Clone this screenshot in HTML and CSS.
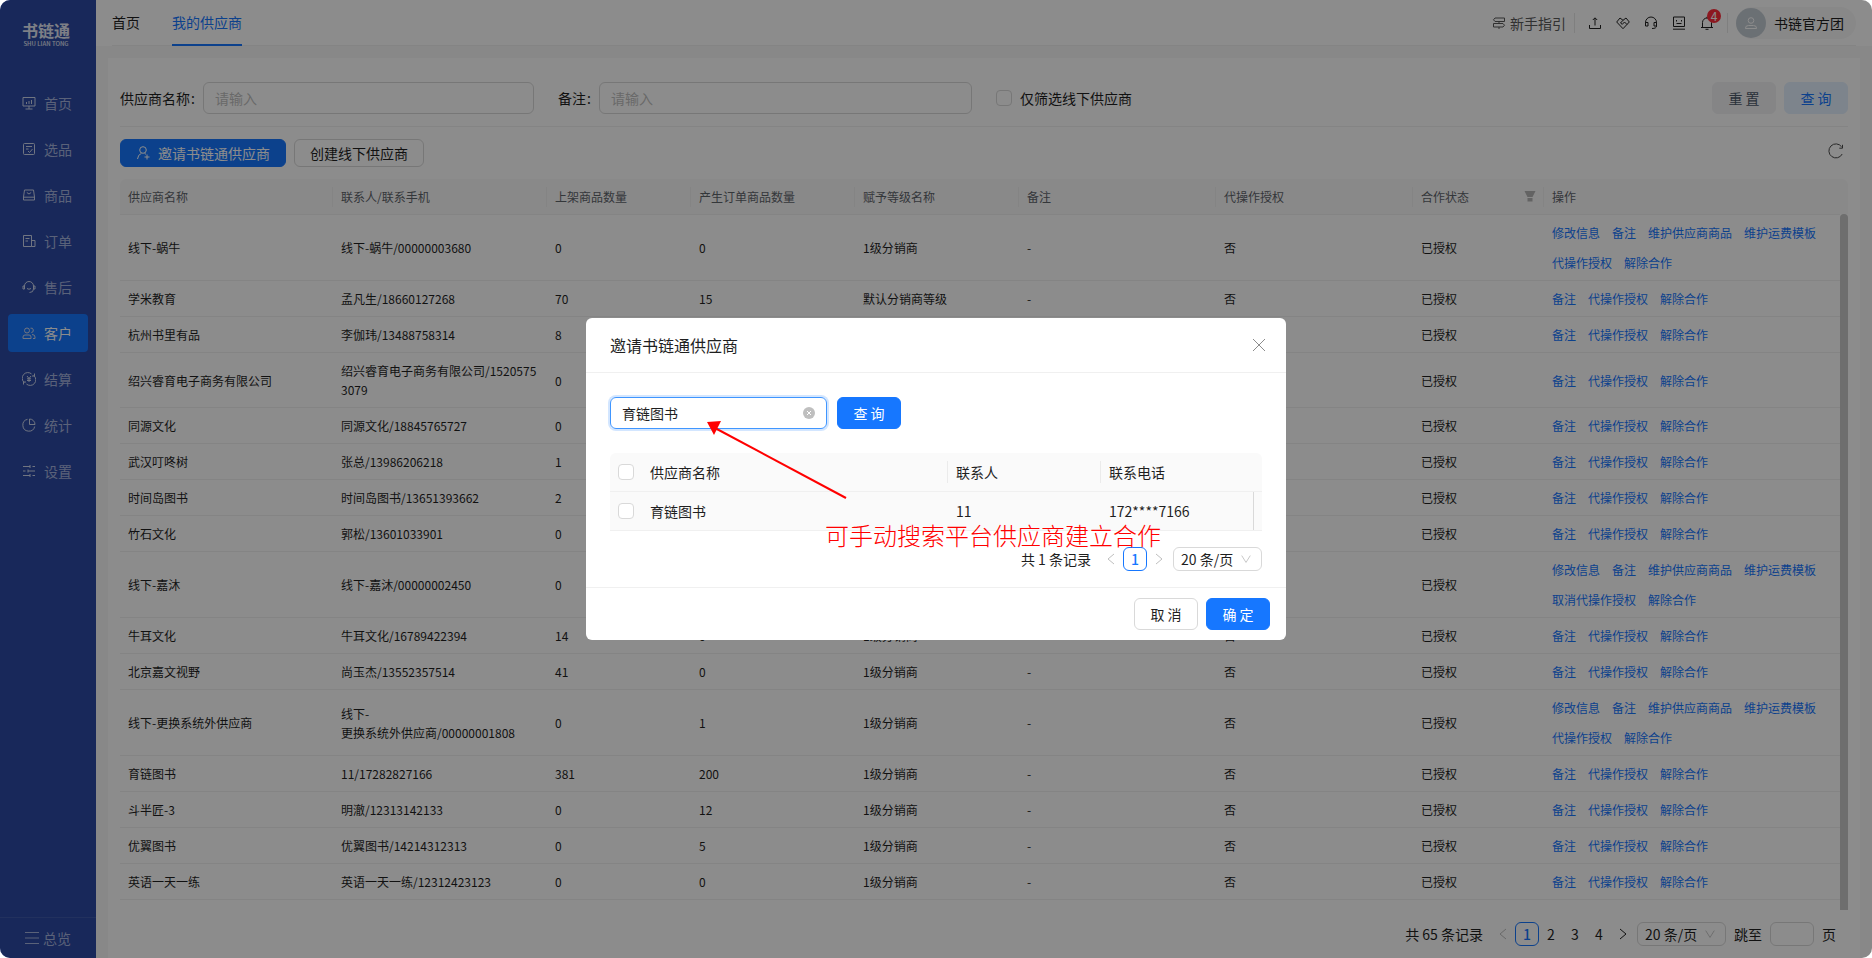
FILE: index.html
```html
<!DOCTYPE html>
<html lang="zh-CN">
<head>
<meta charset="utf-8">
<meta name="viewport" content="width=device-width, initial-scale=1">
<title>我的供应商 - 书链通</title>
<link rel="stylesheet" href="styles.css">
</head>
<body>
<div class="app">
  <aside class="sidebar">
    <div class="logo"><span class="logo-name">书链通</span><span class="logo-sub">SHU LIAN TONG</span></div>
    <nav class="menu">
      <a class="menu-item" href="#"><svg class="icon" viewBox="0 0 14 14"><path d="M1 1.500h12v8.500H1zM3.500 13h7M7 10v3M4.500 8V6M7 8V5M9.500 8V4"/></svg>首页</a>
      <a class="menu-item" href="#"><svg class="icon" viewBox="0 0 14 14"><rect x="1.500" y="1.500" width="11" height="11" rx="1"/><path d="M4 4.500h6M4 7h2.500M6 9l1.500 1.500L10.500 7"/></svg>选品</a>
      <a class="menu-item" href="#"><svg class="icon" viewBox="0 0 14 14"><path d="M2.500 2h9l1 7v3h-11V9zM1.500 9.200h11M4.800 4.500Q7 7.500 9.200 4.500"/></svg>商品</a>
      <a class="menu-item" href="#"><svg class="icon" viewBox="0 0 14 14"><path d="M1.500 1.500h8v11h-8zM9.500 6.500H13v6H9.500M3.500 4.500h4M3.500 7h2.500"/></svg>订单</a>
      <a class="menu-item" href="#"><svg class="icon" viewBox="0 0 14 14"><path d="M2.500 9V6a4.500 4.500 0 0 1 9 0v3M2.500 6H1v3h1.500M11.500 6H13v3h-1.500M11.500 9q0 3.500-4 3.500M5 8.500q2 1.500 4 0"/></svg>售后</a>
      <a class="menu-item active" href="#"><svg class="icon" viewBox="0 0 14 14"><circle cx="5" cy="4.500" r="2.500"/><path d="M1 12.500V11q0-2 2-2h4q2 0 2 2v1.500zM8.500 2.200a2.200 2.200 0 1 1 .8 4.300M10 8.500q3 0 3 2.500v1.500h-2"/></svg>客户</a>
      <a class="menu-item" href="#"><svg class="icon" viewBox="0 0 14 14"><path d="M2.200 10.500A5.600 5.600 0 0 1 9.500 1.900M11.800 3.500A5.600 5.600 0 0 1 4.500 12.100M1.500 12.500v-2.500h2.500M12.500 1.500V4H10M5 4l2 2.500L9 4M7 6.500V10M5 6.800h4M5 8.500h4"/></svg>结算</a>
      <a class="menu-item" href="#"><svg class="icon" viewBox="0 0 14 14"><path d="M5.500 1.300A6 6 0 1 0 12.700 8.500M7.500 1v5.500H13A5.500 5.500 0 0 0 7.500 1z"/></svg>统计</a>
      <a class="menu-item" href="#"><svg class="icon" viewBox="0 0 14 14"><path d="M1 2.500h7M10.500 2.500H13M8 1v3M1 7h2.500M6 7h7M6 5.500v3M1 11.500h7M10.500 11.500H13M8 10v3"/></svg>设置</a>
    </nav>
    <a class="overview" href="#"><svg class="icon" viewBox="0 0 14 14"><path d="M0 1.500h14M0 7h14M0 12.500h14"/></svg>总览</a>
  </aside>

  <div class="main">
    <header class="topbar">
      <nav class="tabs"><a class="tab" href="#">首页</a><a class="tab current" href="#">我的供应商</a></nav>
      <div class="tools">
        <a class="guide" href="#"><svg class="icon" viewBox="0 0 14 14"><path d="M3 2h9.500v3.500H3L1.500 3.800zM11 7.500H1.500V11H11l1.500-1.800zM7 5.500v2M7 11v2"/></svg>新手指引</a>
        <span class="divider"></span>
        <div class="tool-icons">
          <button class="tool" aria-label="上传"><svg class="icon" viewBox="0 0 14 14"><path d="M1.500 9v3.500h11V9M7 9.500V2M4.800 4L7 1.800 9.200 4"/></svg></button>
          <button class="tool" aria-label="合作"><svg class="icon" viewBox="0 0 14 14"><path d="M7 12.700L.7 6 4 2l3 2.300L10 2l3.300 4zM7 4.300L4.500 7l1.800 1.300L8.500 6l2.500 2.500"/></svg></button>
          <button class="tool" aria-label="客服"><svg class="icon" viewBox="0 0 14 14"><path d="M1.500 9V6.500a5.500 5.500 0 0 1 11 0V9M1.500 6.500H4V10H1.500zM12.500 6.500H10V10h2.500zM12.500 10q0 2.500-4.500 2.500"/></svg></button>
          <button class="tool" aria-label="反馈"><svg class="icon" viewBox="0 0 14 14"><path d="M1.500 1h11v9.500h-11zM1 13.200h12M4.500 4v1.500M9.500 4v1.500M4.500 7.500h5"/></svg></button>
          <button class="tool" aria-label="消息"><svg class="icon" viewBox="0 0 14 14"><path d="M1 11.500h12M2.500 11.500V6.500a4.500 4.500 0 0 1 9 0v5M7 2V.8M5.500 13.300h3"/></svg><span class="badge">4</span></button>
        </div>
        <span class="divider"></span>
        <a class="user" href="#"><span class="avatar"><svg class="icon" viewBox="0 0 14 14"><circle cx="7" cy="4.500" r="2.800"/><path d="M1.500 12.500V12q0-2.500 3-2.500h5q3 0 3 2.500v.5z"/></svg></span>书链官方团</a>
      </div>
    </header>

    <section class="card">
      <form class="filters">
        <div class="field"><label for="name">供应商名称<span class="colon">:</span></label><input class="text-input" id="name" type="text" placeholder="请输入"></div>
        <div class="field"><label for="remark">备注<span class="colon">:</span></label><input class="text-input" id="remark" type="text" placeholder="请输入"></div>
        <label class="check-label"><input class="check" type="checkbox">仅筛选线下供应商</label>
        <div class="filter-actions"><button class="btn reset" type="button">重 置</button><button class="btn search" type="button">查 询</button></div>
      </form>
      <div class="toolbar">
        <button class="btn small primary"><svg class="icon" viewBox="0 0 14 14"><circle cx="7" cy="4" r="3.300"/><path d="M1.500 13q.5-4.500 4-5.700M8.500 7.300l1.500 1M11 8.500v5M8.500 11h5"/></svg>邀请书链通供应商</button>
        <button class="btn small">创建线下供应商</button>
        <button class="refresh" aria-label="刷新"><svg class="icon" viewBox="0 0 16 16"><path d="M14.200 11A7 7 0 1 1 13.600 3.800M14.500 1.800v3.400h-3.200"/></svg></button>
      </div>

      <div class="table-area">
        <table class="grid">
          <colgroup><col class="c-name"><col class="c-contact"><col class="c-listed"><col class="c-ordered"><col class="c-ordered"><col class="c-note"><col class="c-note"><col class="c-status"><col class="c-ops"></colgroup>
          <thead><tr><th>供应商名称</th><th>联系人/联系手机</th><th>上架商品数量</th><th>产生订单商品数量</th><th>赋予等级名称</th><th>备注</th><th>代操作授权</th><th><div class="th-filter">合作状态<svg class="funnel" viewBox="0 0 12 11"><path d="M.5 0h11L8.500 6h-5zM3.500 7h5v3.500h-5z"/></svg></div></th><th>操作</th></tr></thead>
          <tbody>
            <tr><td>线下-蜗牛</td><td>线下-蜗牛/00000003680</td><td>0</td><td>0</td><td>1级分销商</td><td>-</td><td>否</td><td>已授权</td><td><div class="ops"><a href="#">修改信息</a><a href="#">备注</a><a href="#">维护供应商商品</a><a href="#">维护运费模板</a><a href="#">代操作授权</a><a href="#">解除合作</a></div></td></tr>
            <tr><td>学米教育</td><td>孟凡生/18660127268</td><td>70</td><td>15</td><td>默认分销商等级</td><td>-</td><td>否</td><td>已授权</td><td><div class="ops"><a href="#">备注</a><a href="#">代操作授权</a><a href="#">解除合作</a></div></td></tr>
            <tr><td>杭州书里有品</td><td>李伽玮/13488758314</td><td>8</td><td>0</td><td>1级分销商</td><td>-</td><td>否</td><td>已授权</td><td><div class="ops"><a href="#">备注</a><a href="#">代操作授权</a><a href="#">解除合作</a></div></td></tr>
            <tr><td>绍兴睿育电子商务有限公司</td><td>绍兴睿育电子商务有限公司/1520575<br>3079</td><td>0</td><td>0</td><td>1级分销商</td><td>-</td><td>否</td><td>已授权</td><td><div class="ops"><a href="#">备注</a><a href="#">代操作授权</a><a href="#">解除合作</a></div></td></tr>
            <tr><td>同源文化</td><td>同源文化/18845765727</td><td>0</td><td>0</td><td>1级分销商</td><td>-</td><td>否</td><td>已授权</td><td><div class="ops"><a href="#">备注</a><a href="#">代操作授权</a><a href="#">解除合作</a></div></td></tr>
            <tr><td>武汉叮咚树</td><td>张总/13986206218</td><td>1</td><td>0</td><td>1级分销商</td><td>-</td><td>否</td><td>已授权</td><td><div class="ops"><a href="#">备注</a><a href="#">代操作授权</a><a href="#">解除合作</a></div></td></tr>
            <tr><td>时间岛图书</td><td>时间岛图书/13651393662</td><td>2</td><td>0</td><td>1级分销商</td><td>-</td><td>否</td><td>已授权</td><td><div class="ops"><a href="#">备注</a><a href="#">代操作授权</a><a href="#">解除合作</a></div></td></tr>
            <tr><td>竹石文化</td><td>郭松/13601033901</td><td>0</td><td>0</td><td>1级分销商</td><td>-</td><td>否</td><td>已授权</td><td><div class="ops"><a href="#">备注</a><a href="#">代操作授权</a><a href="#">解除合作</a></div></td></tr>
            <tr><td>线下-嘉沐</td><td>线下-嘉沐/00000002450</td><td>0</td><td>0</td><td>1级分销商</td><td>-</td><td>是</td><td>已授权</td><td><div class="ops"><a href="#">修改信息</a><a href="#">备注</a><a href="#">维护供应商商品</a><a href="#">维护运费模板</a><a href="#">取消代操作授权</a><a href="#">解除合作</a></div></td></tr>
            <tr><td>牛耳文化</td><td>牛耳文化/16789422394</td><td>14</td><td>0</td><td>1级分销商</td><td>-</td><td>否</td><td>已授权</td><td><div class="ops"><a href="#">备注</a><a href="#">代操作授权</a><a href="#">解除合作</a></div></td></tr>
            <tr><td>北京嘉文视野</td><td>尚玉杰/13552357514</td><td>41</td><td>0</td><td>1级分销商</td><td>-</td><td>否</td><td>已授权</td><td><div class="ops"><a href="#">备注</a><a href="#">代操作授权</a><a href="#">解除合作</a></div></td></tr>
            <tr><td>线下-更换系统外供应商</td><td>线下-<br>更换系统外供应商/00000001808</td><td>0</td><td>1</td><td>1级分销商</td><td>-</td><td>否</td><td>已授权</td><td><div class="ops"><a href="#">修改信息</a><a href="#">备注</a><a href="#">维护供应商商品</a><a href="#">维护运费模板</a><a href="#">代操作授权</a><a href="#">解除合作</a></div></td></tr>
            <tr><td>育链图书</td><td>11/17282827166</td><td>381</td><td>200</td><td>1级分销商</td><td>-</td><td>否</td><td>已授权</td><td><div class="ops"><a href="#">备注</a><a href="#">代操作授权</a><a href="#">解除合作</a></div></td></tr>
            <tr><td>斗半匠-3</td><td>明澈/12313142133</td><td>0</td><td>12</td><td>1级分销商</td><td>-</td><td>否</td><td>已授权</td><td><div class="ops"><a href="#">备注</a><a href="#">代操作授权</a><a href="#">解除合作</a></div></td></tr>
            <tr><td>优翼图书</td><td>优翼图书/14214312313</td><td>0</td><td>5</td><td>1级分销商</td><td>-</td><td>否</td><td>已授权</td><td><div class="ops"><a href="#">备注</a><a href="#">代操作授权</a><a href="#">解除合作</a></div></td></tr>
            <tr><td>英语一天一练</td><td>英语一天一练/12312423123</td><td>0</td><td>0</td><td>1级分销商</td><td>-</td><td>否</td><td>已授权</td><td><div class="ops"><a href="#">备注</a><a href="#">代操作授权</a><a href="#">解除合作</a></div></td></tr>
          </tbody>
        </table>
        <div class="scroll-rail"><div class="scroll-head"></div><div class="scroll-thumb"></div></div>
      </div>

      <div class="pager page-pager">
        <span class="total">共 65 条记录</span>
        <div class="pages">
          <button class="page off" aria-label="上一页"><svg class="icon" viewBox="0 0 14 14"><path d="M10 2L4 7l6 5"/></svg></button>
          <button class="page on">1</button><button class="page">2</button><button class="page">3</button><button class="page">4</button>
          <button class="page" aria-label="下一页"><svg class="icon" viewBox="0 0 14 14"><path d="M4 2l6 5-6 5"/></svg></button>
        </div>
        <span class="size"><select aria-label="每页条数"><option>20 条/页</option></select><svg class="icon" viewBox="0 0 14 14"><path d="M2 3l5 8 5-8"/></svg></span>
        <div class="jumper"><label for="jump">跳至</label><input class="jump" id="jump" type="text"><span>页</span></div>
      </div>
    </section>
  </div>

  <div class="mask">
    <div class="modal" role="dialog" aria-labelledby="modal-title">
      <div class="modal-head"><h2 id="modal-title">邀请书链通供应商</h2><button class="close" aria-label="关闭"><svg class="icon" viewBox="0 0 14 14"><path d="M1 1l12 12M13 1L1 13"/></svg></button></div>
      <div class="modal-body">
        <div class="modal-search">
          <div class="search-box"><input type="text" value="育链图书" aria-label="供应商名称"><button class="clear" aria-label="清空"><svg viewBox="0 0 12 12"><circle cx="6" cy="6" r="6"/><path d="M4 4l4 4M8 4L4 8"/></svg></button></div>
          <button class="btn primary">查 询</button>
        </div>
        <table class="picker">
          <colgroup><col class="p-check"><col class="p-name"><col class="p-contact"><col class="p-phone"></colgroup>
          <thead><tr><th><input class="check" type="checkbox" aria-label="全选"></th><th>供应商名称</th><th>联系人</th><th>联系电话</th></tr></thead>
          <tbody><tr><td><input class="check" type="checkbox" aria-label="选择育链图书"></td><td>育链图书</td><td>11</td><td><div class="edge">172****7166</div></td></tr></tbody>
        </table>
        <div class="pager">
          <span class="total">共 1 条记录</span>
          <div class="pages">
            <button class="page off" aria-label="上一页"><svg class="icon" viewBox="0 0 14 14"><path d="M10 2L4 7l6 5"/></svg></button>
            <button class="page on">1</button>
            <button class="page off" aria-label="下一页"><svg class="icon" viewBox="0 0 14 14"><path d="M4 2l6 5-6 5"/></svg></button>
          </div>
          <span class="size"><select aria-label="每页条数"><option>20 条/页</option></select><svg class="icon" viewBox="0 0 14 14"><path d="M2 3l5 8 5-8"/></svg></span>
        </div>
      </div>
      <div class="modal-foot"><button class="btn">取 消</button><button class="btn primary">确 定</button></div>
      <svg class="arrow" viewBox="0 0 140 78"><path class="shaft" d="M8 7L139 77"/><path class="tip" d="M0 1L14 0 7 14z"/></svg>
      <p class="note">可手动搜索平台供应商建立合作</p>
    </div>
  </div>
</div>
</body>
</html>
```

FILE: styles.css
```css
* { box-sizing: border-box; }

body {
  margin: 0;
  background: #fff;
  color: #1f1f1f;
  font: 14px/22px "Noto Sans CJK SC", sans-serif;
}

button, input, select { font: inherit; color: inherit; margin: 0; }
button { cursor: pointer; }
a { color: inherit; text-decoration: none; }

.icon {
  width: 14px;
  height: 14px;
  fill: none;
  stroke: currentColor;
  flex: none;
}

.app {
  position: relative;
  display: flex;
  min-height: 100vh;
  border-radius: 10px;
  overflow: hidden;
}

/* Sidebar */
.sidebar {
  flex: none;
  width: 96px;
  display: flex;
  flex-direction: column;
  background: #2c4aa4;
  color: #a5b2dd;
}
.logo {
  height: 84px;
  padding-top: 20px;
  padding-right: 4px;
  display: flex;
  flex-direction: column;
  align-items: center;
  color: #e4e8f5;
  font-weight: 700;
}
.logo-name { font-size: 16px; line-height: 20px; }
.logo-sub { font-size: 6px; line-height: 8px; font-weight: 500; white-space: nowrap; }
.menu { display: flex; flex-direction: column; gap: 8px; padding: 0 8px; }
.menu-item {
  display: flex;
  align-items: center;
  gap: 8px;
  height: 38px;
  padding-left: 14px;
  border-radius: 4px;
}
.menu-item .icon { stroke: #cdd5ec; }
.menu-item.active { background: #1677ff; color: #fff; }
.overview {
  margin-top: auto;
  height: 41px;
  display: flex;
  align-items: center;
  justify-content: center;
  gap: 4px;
  border-top: 1px solid #3f5aac;
}

/* Top bar */
.main { flex: 1; min-width: 0; display: flex; flex-direction: column; background: #f7f7f7; }
.topbar {
  height: 46px;
  padding: 0 16px;
  display: flex;
  justify-content: space-between;
  background: #fff;
}
.tabs { display: flex; gap: 32px; flex: 1; border-bottom: 1px solid #f0f0f0; }
.tab { height: 46px; line-height: 44px; }
.tab.current { color: #1677ff; border-bottom: 2px solid #1677ff; }
.tools { display: flex; align-items: center; border-bottom: 1px solid #f0f0f0; }
.guide { display: flex; align-items: center; gap: 4px; color: #595959; }
.divider { width: 1px; height: 20px; margin: 0 8px; background: #e8e8e8; }
.tool-icons { display: flex; gap: 12px; padding: 0 4px; }
.tool {
  position: relative;
  width: 16px;
  height: 16px;
  padding: 1px;
  border: 0;
  background: none;
  display: flex;
}
.badge {
  position: absolute;
  left: 8px;
  top: -6px;
  width: 14px;
  height: 14px;
  border-radius: 50%;
  background: #ff2d3b;
  color: #fff;
  font-size: 12px;
  line-height: 13px;
  text-align: center;
}
.user {
  display: flex;
  align-items: center;
  gap: 8px;
  height: 32px;
  padding-right: 12px;
  border-radius: 16px;
  background: #f8f8f8;
}
.avatar {
  width: 30px;
  height: 30px;
  border-radius: 50%;
  background: #c4ccd4;
  color: #fff;
  display: grid;
  place-items: center;
}

/* Page card */
.card {
  flex: 1;
  margin: 12px 12px 0;
  padding: 24px 12px 12px;
  display: flex;
  flex-direction: column;
  background: #fff;
}
.filters {
  display: grid;
  grid-template-columns: repeat(4, 1fr);
  column-gap: 24px;
  align-items: center;
  padding-bottom: 12px;
  border-bottom: 1px solid #f0f0f0;
}
.field { display: flex; align-items: center; }
.colon { margin: 0 8px 0 1px; }
.text-input {
  flex: 1;
  min-width: 0;
  height: 32px;
  padding: 0 11px;
  border: 1px solid #d9d9d9;
  border-radius: 6px;
  background: #fff;
}
.text-input::placeholder { color: #bfbfbf; }
.check-label { display: flex; align-items: center; gap: 8px; }
.check {
  appearance: none;
  width: 16px;
  height: 16px;
  border: 1px solid #d9d9d9;
  border-radius: 4px;
  background: #fff;
}
.filter-actions { display: flex; justify-content: flex-end; gap: 8px; }

.btn {
  height: 32px;
  padding: 0 15px;
  border: 1px solid #d9d9d9;
  border-radius: 6px;
  background: #fff;
  display: flex;
  align-items: center;
  justify-content: center;
  gap: 8px;
  min-width: 64px;
  white-space: nowrap;
}
.btn.small { height: 28px; }
.btn.primary { background: #1677ff; border-color: #1677ff; color: #fff; }
.btn.reset { background: #f2f3f5; border-color: #f2f3f5; color: #4e5969; }
.btn.search { background: #e3f1ff; border-color: #e3f1ff; color: #1677ff; }
.toolbar { display: flex; gap: 8px; padding: 12px 0; }
.refresh {
  margin-left: auto;
  padding: 4px;
  border: 0;
  background: none;
  display: flex;
  align-items: flex-start;
  color: #4b4b4b;
}
.refresh .icon { width: 16px; height: 16px; }

/* Supplier table */
.table-area { flex: 1; display: flex; margin-bottom: 12px; font-size: 12px; line-height: 19px; }
.grid {
  flex: 1;
  align-self: flex-start;
  table-layout: fixed;
  border-collapse: separate;
  border-spacing: 0;
}
.c-name { width: 213px; }
.c-contact { width: 214px; }
.c-listed { width: 144px; }
.c-ordered { width: 164px; }
.c-note { width: 197px; }
.c-status { width: 131px; }
.c-ops { width: 296px; }
.grid th, .grid td {
  padding: 8px;
  border-bottom: 1px solid #f0f0f0;
  text-align: left;
  font-weight: 400;
}
.grid th {
  background: linear-gradient(#f0f0f0, #f0f0f0) right center / 1px 20px no-repeat #fafafa;
  color: #5f646b;
}
.grid th:first-child { border-top-left-radius: 6px; }
.grid th:last-child { background: #fafafa; }
.th-filter { display: flex; align-items: center; justify-content: space-between; }
.funnel { width: 12px; height: 11px; fill: #b5b5b5; }
.ops { display: flex; flex-wrap: wrap; gap: 11px 12px; color: #1677ff; }
.scroll-rail { flex: none; width: 8px; display: flex; flex-direction: column; }
.scroll-head { height: 35px; background: #fafafa; border-top-right-radius: 6px; }
.scroll-thumb { flex: 1; background: #c8c8c8; border-radius: 4px 4px 0 0; }

/* Pagination */
.pager { display: flex; align-items: center; justify-content: flex-end; }
.page-pager { padding-right: 12px; }
.total { margin-right: 8px; }
.pages { display: flex; margin-right: 2px; }
.page {
  width: 24px;
  height: 24px;
  padding: 0;
  border: 1px solid transparent;
  border-radius: 6px;
  background: none;
  display: grid;
  place-items: center;
  line-height: 22px;
}
.page.on { border-color: #1677ff; color: #1677ff; font-weight: 500; background: #fff; }
.page.off { color: #bfbfbf; }
.size { position: relative; display: flex; }
.size select {
  appearance: none;
  width: 89px;
  height: 24px;
  padding: 0 7px;
  border: 1px solid #d9d9d9;
  border-radius: 6px;
  background: #fff;
  line-height: 22px;
}
.size .icon {
  position: absolute;
  right: 10px;
  top: 6px;
  width: 12px;
  height: 12px;
  color: #bfbfbf;
  pointer-events: none;
}
.jumper { display: flex; align-items: center; gap: 8px; margin-left: 8px; }
.jump { width: 44px; height: 24px; border: 1px solid #d9d9d9; border-radius: 6px; background: #fff; }

/* Dialog */
.mask {
  position: absolute;
  inset: 0;
  display: grid;
  place-items: center;
  background: rgba(0, 0, 0, 0.45);
}
.modal { position: relative; width: 700px; max-width: 100%; border-radius: 6px; background: #fff; }
.modal-head {
  display: flex;
  align-items: center;
  justify-content: space-between;
  padding: 16px 20px 16px 24px;
  border-bottom: 1px solid #f0f0f0;
}
.modal-head h2 { margin: 0; font-size: 16px; line-height: 22px; font-weight: 400; }
.close { padding: 0; border: 0; background: none; display: flex; color: #8c8c8c; }
.modal-body { padding: 24px 24px 16px; }
.modal-search { display: flex; gap: 10px; margin-bottom: 24px; }
.search-box {
  width: 217px;
  height: 32px;
  padding: 0 11px;
  display: flex;
  align-items: center;
  gap: 8px;
  border: 1px solid #4096ff;
  border-radius: 6px;
  box-shadow: 0 0 0 2px #d3e6ff;
}
.search-box input { flex: 1; min-width: 0; padding: 0; border: 0; outline: 0; background: none; }
.clear { padding: 0; border: 0; background: none; display: flex; }
.clear svg { width: 12px; height: 12px; fill: #bfbfbf; stroke: #fff; }
.clear circle { stroke: none; }
.picker { width: 100%; table-layout: fixed; border-collapse: separate; border-spacing: 0; margin-bottom: 16px; }
.p-check { width: 32px; }
.p-name { width: 306px; }
.p-contact { width: 153px; }
.p-phone { width: 161px; }
.picker th, .picker td {
  height: 39px;
  padding: 0 8px;
  border-bottom: 1px solid #f0f0f0;
  background: #fafafa;
  text-align: left;
  font-weight: 400;
}
.picker th:first-child { border-top-left-radius: 6px; }
.picker th:last-child { border-top-right-radius: 6px; }
.picker th:nth-child(2), .picker th:nth-child(3) {
  background: linear-gradient(#ebebeb, #ebebeb) right center / 1px 22px no-repeat #fafafa;
}
.picker .check { display: block; }
.edge { height: 38px; line-height: 38px; border-right: 1px solid #d9d9d9; }
.modal-foot {
  display: flex;
  justify-content: flex-end;
  gap: 8px;
  padding: 10px 16px;
  border-top: 1px solid #f0f0f0;
}

/* Guide annotation over the dialog */
.arrow { position: absolute; left: 121px; top: 103px; width: 140px; height: 78px; pointer-events: none; }
.shaft { fill: none; stroke: #f00; stroke-width: 2; }
.tip { fill: #f00; }
.note {
  position: absolute;
  left: 239px;
  top: 199px;
  margin: 0;
  color: #f00;
  font-size: 24px;
  line-height: 36px;
  font-weight: 300;
  white-space: nowrap;
}
```
